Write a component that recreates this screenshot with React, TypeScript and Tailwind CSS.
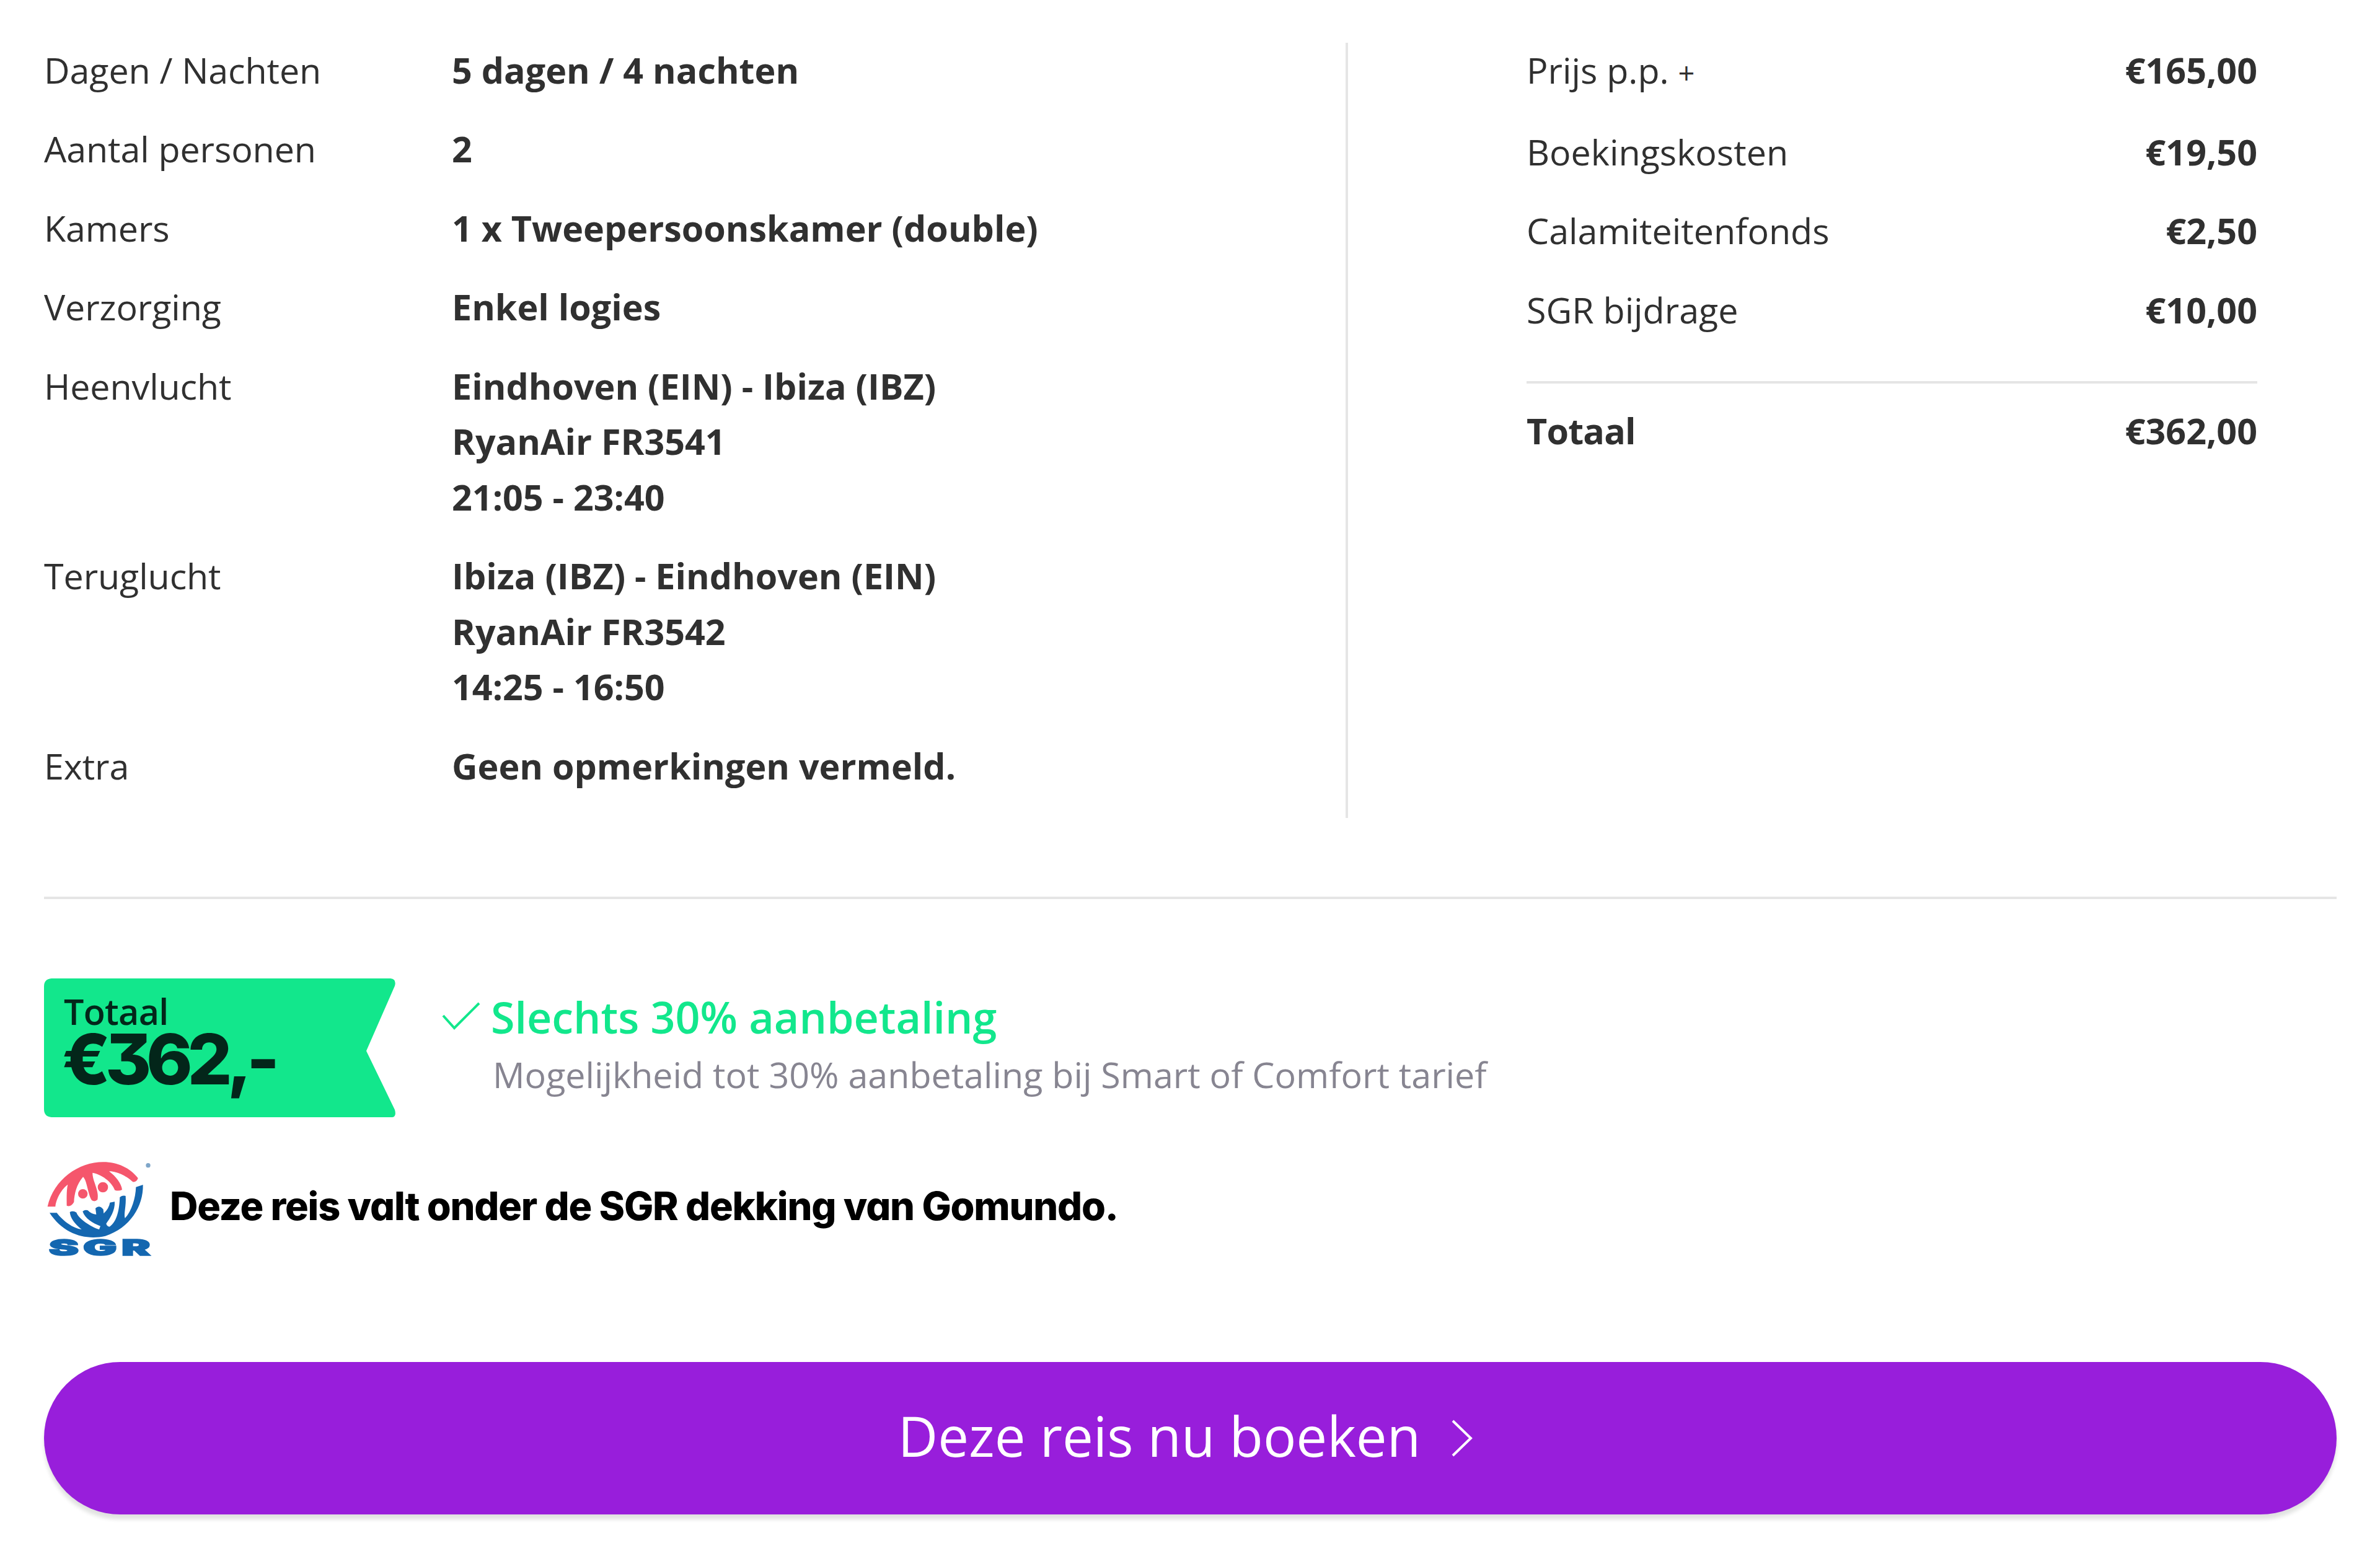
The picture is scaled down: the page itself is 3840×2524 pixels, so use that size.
const details = [
  { label: "Dagen / Nachten", lines: ["5 dagen / 4 nachten"] },
  { label: "Aantal personen", lines: ["2"] },
  { label: "Kamers", lines: ["1 x Tweepersoonskamer (double)"] },
  { label: "Verzorging", lines: ["Enkel logies"] },
  {
    label: "Heenvlucht",
    lines: ["Eindhoven (EIN) - Ibiza (IBZ)", "RyanAir FR3541", "21:05 - 23:40"],
  },
  {
    label: "Teruglucht",
    lines: ["Ibiza (IBZ) - Eindhoven (EIN)", "RyanAir FR3542", "14:25 - 16:50"],
  },
  { label: "Extra", lines: ["Geen opmerkingen vermeld."] },
];

const costs = [
  { label: "Boekingskosten", price: "€19,50" },
  { label: "Calamiteitenfonds", price: "€2,50" },
  { label: "SGR bijdrage", price: "€10,00" },
];

function Details() {
  return (
    <dl className="flex w-[2104px] flex-col gap-[37.8px] border-r-4 border-[#e5e5e5]">
      {details.map((item) => (
        <div key={item.label} className="flex">
          <dt className="w-[658px] tracking-[-0.1px]">{item.label}</dt>
          <dd className="font-bold">
            {item.lines.map((line) => (
              <p key={line}>{line}</p>
            ))}
          </dd>
        </div>
      ))}
    </dl>
  );
}

function Prices() {
  return (
    <div className="ml-[288px] w-[1179px]">
      <div className="mb-[42px] flex h-[90px] justify-between">
        <p>
          Prijs p.p. <span className="text-[47px]">+</span>
        </p>
        <p className="font-bold">€165,00</p>
      </div>
      <div className="flex flex-col gap-[37.8px]">
        {costs.map((cost) => (
          <div key={cost.label} className="flex justify-between">
            <p>{cost.label}</p>
            <p className="font-bold">{cost.price}</p>
          </div>
        ))}
      </div>
      <div className="mt-[70px] flex justify-between border-t-4 border-[#e5e5e5] pt-[32px] font-bold">
        <p className="tracking-[-0.8px]">Totaal</p>
        <p>€362,00</p>
      </div>
    </div>
  );
}

function TotalBadge() {
  return (
    <div className="relative h-[224px] w-[567px]">
      <svg
        className="absolute inset-0 h-full w-full"
        viewBox="0 0 567 224"
        fill="#12e78c"
      >
        <path d="M12 0H559Q569 1 566 12L520 117L566 212Q569 223 562 224H12Q0 223 0 211V13Q0 1 12 0Z" />
      </svg>
      <div className="relative pl-[32px] text-[#03261a]">
        <p className="pt-[21px] text-[57.4px] leading-[64px] font-semibold tracking-[-0.7px]">
          Totaal
        </p>
        <p className="-ml-[3px] font-[Inter] text-[113px] leading-[90px] font-extrabold tracking-[-8.2px] [font-feature-settings:'cv09']">
          €362,-
        </p>
      </div>
    </div>
  );
}

function SgrLogo() {
  return (
    <svg className="h-[200px] w-[200px] shrink-0" viewBox="0 0 600 600">
      <g fill="#f5566c">
        <path d="M50 292H88C92 250 122 203 148 185C141 215 143 260 143 287Q162 296 178 270C180 230 190 185 222 148C242 165 245 235 265 262Q280 270 292 258C302 215 266 165 268 128C310 135 360 170 376 212Q395 218 411 210C408 180 380 145 348 121C390 120 440 150 463 172Q482 174 488 154C450 105 390 76 320 76C200 76 80 160 50 292Z" />
        <circle cx="221" cy="230" r="23" />
        <circle cx="318" cy="198" r="25" />
      </g>
      <path
        fill="#1467b0"
        d="M60 322H95C125 362 175 398 215 402C180 375 160 345 158 318Q174 310 190 320C200 350 260 390 300 402L306 386C270 372 232 350 220 315Q232 305 245 310Q262 328 286 330L282 300Q300 282 320 305L322 325Q348 300 352 272L375 268C378 310 352 350 334 374Q338 388 350 389C388 365 398 300 400 246Q414 236 428 240C432 290 418 325 425 348C458 312 476 250 478 197L512 186C514 290 450 395 330 434C240 455 130 430 60 322Z"
      />
      <circle cx="537" cy="92" r="11" fill="#7fa6c9" />
      <g
        fill="#1467b0"
        stroke="#1467b0"
        strokeWidth="5"
        className="font-[Inter] text-[108px] font-black"
      >
        <text x="56" y="527" textLength="145" lengthAdjust="spacingAndGlyphs">
          S
        </text>
        <text x="222" y="527" textLength="164" lengthAdjust="spacingAndGlyphs">
          G
        </text>
        <text x="408" y="527" textLength="140" lengthAdjust="spacingAndGlyphs">
          R
        </text>
      </g>
    </svg>
  );
}

export default function App() {
  return (
    <div className="h-[2524px] w-[3840px] overflow-hidden bg-white px-[71px] pt-[69px] font-['Open_Sans',sans-serif] text-[57.4px] leading-[89.6px] text-[#303030]">
      <div className="flex h-[1251px]">
        <Details />
        <Prices />
      </div>

      <div className="mt-[127px] mr-[-1px] h-1 bg-[#e5e5e5]" />

      <div className="mt-[128px] flex">
        <TotalBadge />
        <svg
          className="mt-[37px] ml-[74px] h-[50px] w-[64px] shrink-0"
          viewBox="0 0 64 50"
          fill="none"
          stroke="#12e78c"
          strokeWidth="4"
        >
          <path d="M3 23L21 43L61 3" />
        </svg>
        <div className="ml-[16px]">
          <p className="mt-[14px] text-[70px] leading-[96px] font-[620] text-[#12e78c]">
            Slechts 30% aanbetaling
          </p>
          <p className="mt-px ml-[3px] text-[#878591]">
            Mogelijkheid tot 30% aanbetaling bij Smart of Comfort tarief
          </p>
        </div>
      </div>

      <div className="mt-[47px] -ml-[11px] flex items-start">
        <SgrLogo />
        <p className="ml-[14px] pt-[52px] font-[Inter] text-[63px] font-extrabold tracking-[-1.25px] text-black [font-feature-settings:'cv11']">
          Deze reis valt onder de SGR dekking van Gomundo.
        </p>
      </div>

      <button className="mt-[148px] flex h-[246px] w-[3699px] items-center justify-center rounded-full bg-[#981edb] pr-[15px] text-[88.8px] font-[450] text-white shadow-[0_8px_6px_rgba(0,20,0,0.12)]">
        <span className="pb-[8px]">Deze reis nu boeken</span>
        <svg
          className="ml-[49px] h-[62px] w-[36px]"
          viewBox="0 0 36 62"
          fill="none"
          stroke="white"
          strokeWidth="4"
        >
          <path d="M3 3L32 31L3 59" />
        </svg>
      </button>
    </div>
  );
}
